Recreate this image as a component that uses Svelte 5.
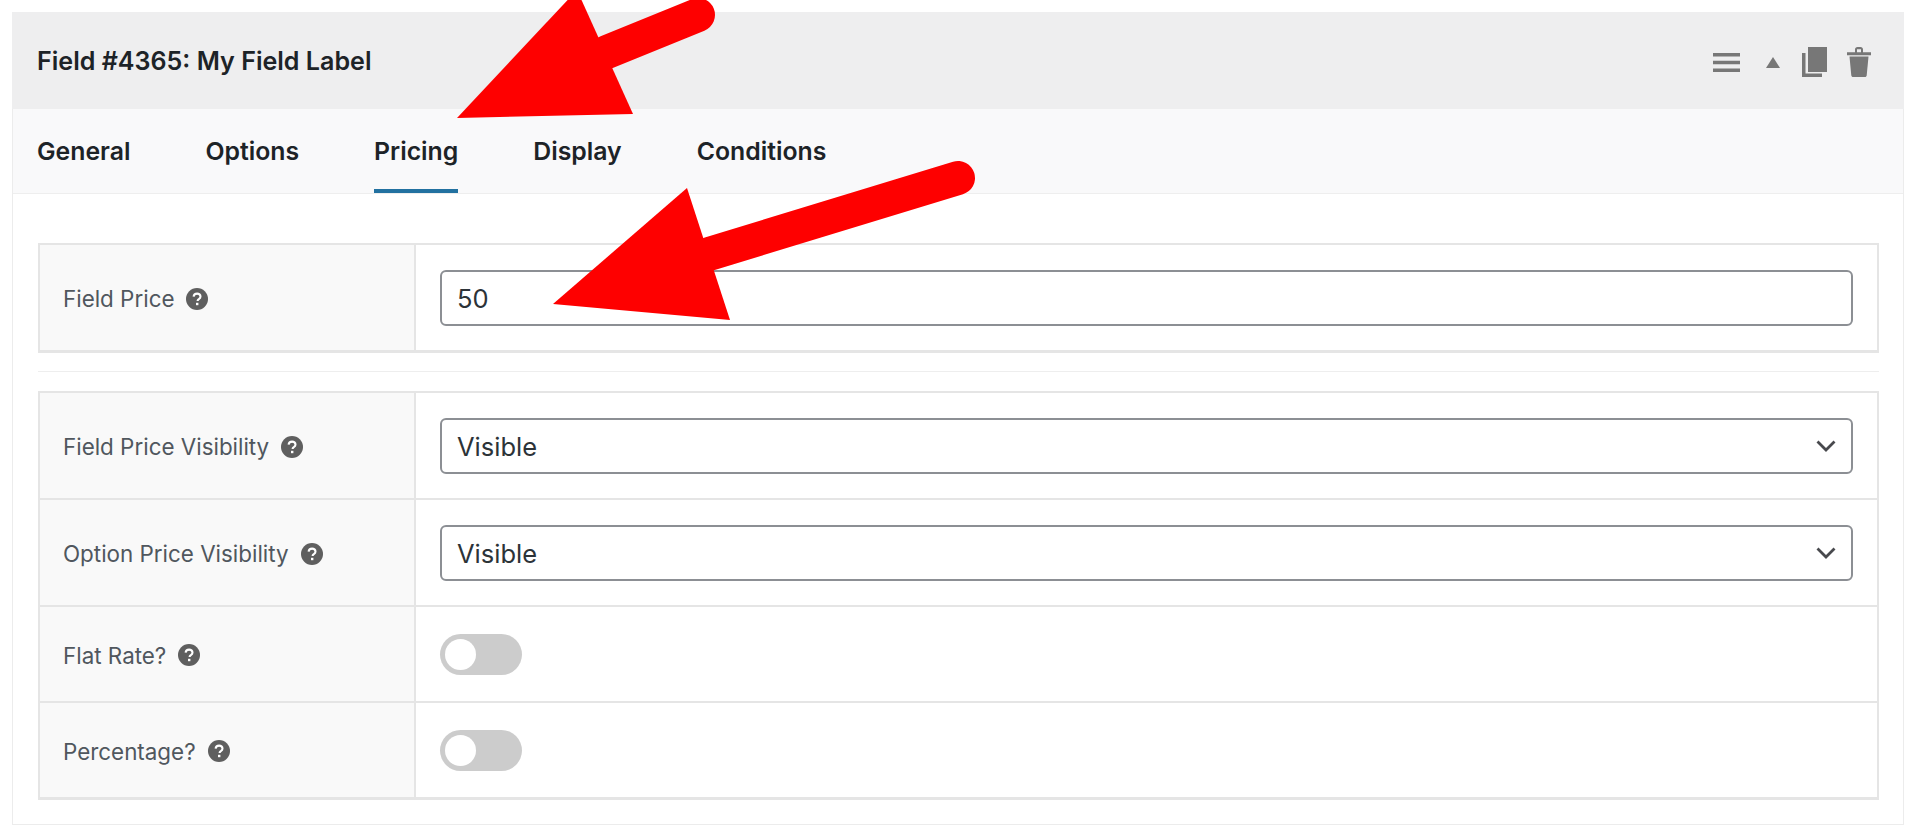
<script>
  const tabs = ['General', 'Options', 'Pricing', 'Display', 'Conditions'];
</script>

{#snippet help()}
  <svg class="help" viewBox="0 0 22 22" aria-hidden="true">
    <circle cx="11" cy="11" r="11" fill="#5f5f5f" />
    <path d="M7.600 8.600c.2-1.900 1.600-3 3.500-3 2 0 3.400 1.100 3.400 2.800 0 1.300-.7 2-1.700 2.700-.9.600-1.200 1-1.200 2" fill="none" stroke="#fff" stroke-width="2.100" />
    <rect x="10" y="14.800" width="2.400" height="2.400" fill="#fff" />
  </svg>
{/snippet}

{#snippet chevron()}
  <svg class="chevron" viewBox="0 0 20 12" aria-hidden="true">
    <path d="M1.500 1.500 10 10l8.500-8.500" fill="none" stroke="#48494d" stroke-width="2.800" />
  </svg>
{/snippet}

<div class="page">
  <section class="panel">
    <header class="head">
      <h2>Field #4365: My Field Label</h2>
      <div class="actions">
        <svg class="menu" viewBox="0 0 27 19" aria-hidden="true">
          <path d="M0 0h27v3.500H0zM0 7.700h27v3.500H0zM0 15.500h27V19H0z" fill="#777" />
        </svg>
        <svg class="up" viewBox="0 0 14 11" aria-hidden="true">
          <path d="M7 0l7 11H0z" fill="#777" />
        </svg>
        <svg class="copy" viewBox="0 0 25 30" aria-hidden="true">
          <path d="M6 0h19v25H6z" fill="#777" />
          <path d="M0 6h3.500v20.500H20V30H0z" fill="#777" />
        </svg>
        <svg class="trash" viewBox="0 0 24 30" aria-hidden="true">
          <path d="M0 5.200h8V2.500C8 1 9 0 10.500 0h3C15 0 16 1 16 2.500v2.700h8V8.200H0zM10 5.200h4V2.300h-4z" fill="#777" fill-rule="evenodd" />
          <path d="M2.500 9.500h19l-1.800 19c-.1.900-.8 1.500-1.700 1.500H6c-.9 0-1.600-.6-1.700-1.500z" fill="#777" />
        </svg>
      </div>
    </header>

    <nav class="tabs">
      {#each tabs as tab}
        <span class="tab" class:active={tab === 'Pricing'}>{tab}</span>
      {/each}
    </nav>

    <div class="content">
      <div class="table">
        <div class="row">
          <div class="label">Field Price {@render help()}</div>
          <div class="value"><div class="control">50</div></div>
        </div>
      </div>

      <hr />

      <div class="table">
        <div class="row">
          <div class="label">Field Price Visibility {@render help()}</div>
          <div class="value"><div class="control select">Visible {@render chevron()}</div></div>
        </div>
        <div class="row">
          <div class="label">Option Price Visibility {@render help()}</div>
          <div class="value"><div class="control select">Visible {@render chevron()}</div></div>
        </div>
        <div class="row short">
          <div class="label">Flat Rate? {@render help()}</div>
          <div class="value"><span class="toggle"></span></div>
        </div>
        <div class="row short">
          <div class="label">Percentage? {@render help()}</div>
          <div class="value"><span class="toggle"></span></div>
        </div>
      </div>
    </div>
  </section>

  <svg class="arrows" viewBox="0 0 1920 837" aria-hidden="true">
    <path d="M607 52 698 15" stroke="#fe0000" stroke-width="34" stroke-linecap="round" fill="none" />
    <path d="M457 118 577 -10 633 114z" fill="#fe0000" />
    <path d="M709 254 958 178" stroke="#fe0000" stroke-width="34" stroke-linecap="round" fill="none" />
    <path d="M687 188 553 304 730 320z" fill="#fe0000" />
  </svg>
</div>

<style>
  :global(body) {
    margin: 0;
    background: #fff;
  }
  .page {
    position: relative;
    height: 837px;
    padding: 12px 16px 0 12px;
    box-sizing: border-box;
    overflow: hidden;
    font-family: Inter, "Liberation Sans", sans-serif;
  }
  .panel {
    border: 1px solid #ececec;
    border-top: 0;
    height: 813px;
    box-sizing: border-box;
  }
  .head {
    height: 97px;
    box-sizing: border-box;
    margin: 0 -1px;
    padding: 1px 33px 0 25px;
    background: #eeeeef;
    display: flex;
    align-items: center;
    justify-content: space-between;
  }
  h2 {
    margin: 0;
    font-size: 25.100px;
    font-weight: 600;
    color: #1d2327;
  }
  .actions {
    display: flex;
    align-items: center;
    margin-top: 2px;
  }
  .menu { width: 27px; height: 19px; }
  .up { width: 14px; height: 11px; margin-left: 26px; }
  .copy { width: 25px; height: 30px; margin-left: 22px; }
  .trash { width: 24px; height: 30px; margin-left: 20px; }
  .tabs {
    height: 85px;
    background: #f9f9fa;
    border-bottom: 1px solid #eeeeee;
    box-sizing: border-box;
    display: flex;
    gap: 75px;
    padding-left: 24px;
  }
  .tab {
    height: 84px;
    box-sizing: border-box;
    line-height: 84px;
    font-size: 24.800px;
    font-weight: 600;
    color: #1d2327;
  }
  .tab.active {
    border-bottom: 4px solid #2271a0;
  }
  .content {
    padding: 49px 24px 0 25px;
  }
  .table {
    border: 2px solid #e5e5e5;
    border-bottom-width: 1px;
  }
  .row {
    display: flex;
    height: 107px;
    border-bottom: 2px solid #e5e5e5;
    box-sizing: border-box;
  }
  .row.short {
    height: 96px;
  }
  .label {
    width: 376px;
    flex: none;
    box-sizing: border-box;
    padding: 2px 0 0 23px;
    background: #f9f9f9;
    border-right: 2px solid #e5e5e5;
    display: flex;
    align-items: center;
    gap: 12px;
    font-size: 22.400px;
    color: #50575e;
  }
  .help {
    width: 22px;
    height: 22px;
  }
  .value {
    flex: 1;
    padding: 0 24px;
    display: flex;
    align-items: center;
  }
  .control {
    flex: 1;
    height: 56px;
    box-sizing: border-box;
    border: 2px solid #8c8f94;
    border-radius: 6px;
    padding: 2px 15px 0;
    display: flex;
    align-items: center;
    justify-content: space-between;
    font-size: 25.500px;
    color: #2c3338;
  }
  .chevron {
    width: 20px;
    height: 12px;
    margin-top: -2px;
  }
  hr {
    border: 0;
    border-top: 1px solid #eeeeee;
    margin: 18px 0 19px;
  }
  .toggle {
    width: 82px;
    height: 41px;
    border-radius: 21px;
    background: #cccccc;
    position: relative;
  }
  .toggle::before {
    content: '';
    position: absolute;
    left: 5px;
    top: 5px;
    width: 31px;
    height: 31px;
    border-radius: 50%;
    background: #fff;
  }
  .arrows {
    position: absolute;
    inset: 0;
    width: 1920px;
    height: 837px;
    overflow: hidden;
    pointer-events: none;
  }
</style>
